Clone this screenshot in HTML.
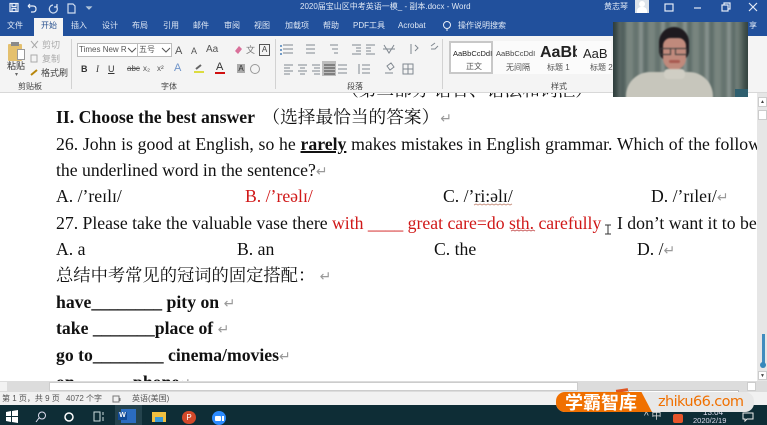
<!DOCTYPE html>
<html><head><meta charset="utf-8"><style>
html,body{margin:0;padding:0;background:#fff}
#p{position:relative;width:767px;height:425px;overflow:hidden;background:#fff;font-family:"Liberation Sans","Noto Sans CJK SC",sans-serif}
#p div,#p svg{position:absolute}
.t{white-space:nowrap;color:#444;font-size:8px;line-height:10px;filter:blur(.25px)}
.w{color:#dfe8f5}
.d{font-family:"Liberation Serif","Noto Serif CJK SC",serif;font-size:17.7px;line-height:20px;color:#111;white-space:nowrap;filter:blur(.35px)}
.b{font-weight:bold}.r{color:#d01818}
.m{color:#999;font-size:14px;line-height:10px;font-family:"DejaVu Sans",sans-serif;font-weight:normal}
.u{text-decoration:underline;text-decoration-thickness:1.5px}
.g{font-size:9px;color:#555}
</style></head><body><div id="p">
<!-- title bar -->
<div style="left:0;top:0;width:767px;height:36px;background:#21509c"></div>
<div class="t w" style="left:7px;top:21px;">文件</div>
<div style="left:34px;top:18px;width:29px;height:20px;background:#f4f4f4"></div>
<div class="t" style="left:41px;top:21px;color:#27508f">开始</div>
<div class="t w" style="left:71px;top:21px">插入</div>
<div class="t w" style="left:102px;top:21px">设计</div>
<div class="t w" style="left:132px;top:21px">布局</div>
<div class="t w" style="left:163px;top:21px">引用</div>
<div class="t w" style="left:193px;top:21px">邮件</div>
<div class="t w" style="left:224px;top:21px">审阅</div>
<div class="t w" style="left:254px;top:21px">视图</div>
<div class="t w" style="left:285px;top:21px">加载项</div>
<div class="t w" style="left:323px;top:21px">帮助</div>
<div class="t w" style="left:353px;top:21px">PDF工具</div>
<div class="t w" style="left:398px;top:21px">Acrobat</div>
<div class="t w" style="left:458px;top:21px">操作说明搜索</div>
<div class="t w" style="left:749px;top:21px">享</div>
<svg style="left:441px;top:20px" width="12" height="13" viewBox="0 0 12 13"><circle cx="6" cy="5" r="3.5" fill="none" stroke="#e8eef8"/><path d="M5 10h2" stroke="#e8eef8"/></svg>
<div class="t w" style="left:300px;top:2px;font-size:8px">2020届宝山区中考英语一模_ - 副本.docx  -  Word</div>
<!-- qat -->
<svg style="left:8px;top:2px" width="90" height="14" viewBox="0 0 90 14" fill="none" stroke="#e8eef8" stroke-width="1.2"><rect x="2" y="1.5" width="8" height="8"/><path d="M4 2v2.500h4V2M4 9.500V6.500h4v3"/><path d="M20 4h5q3 0 3 3t-3 3h-2M20 4l2-2M20 4l2 2"/><path d="M45 3a4 4 0 1 0 3 1M49 2v3h-3" stroke="#cfdcef"/><path d="M60 2h5l2 2v7h-7z" stroke="#cfdcef"/><path d="M79 5h4l-2 2z" stroke="#bcd"/></svg>
<!-- top right -->
<div class="t w" style="left:604px;top:2px;font-size:8px">黄志琴</div>
<div style="left:635px;top:0;width:14px;height:13px;background:#dde3ea"></div>
<div style="left:639px;top:1px;width:6px;height:6px;border-radius:3px;background:#fff"></div>
<div style="left:637px;top:7px;width:10px;height:6px;border-radius:4px 4px 0 0;background:#fff"></div>
<svg style="left:664px;top:2px" width="100" height="11" viewBox="0 0 100 11" fill="none" stroke="#e4ebf6" stroke-width="1.2"><rect x="1" y="2" width="8" height="7"/><path d="M30 6h7"/><rect x="58" y="3" width="6" height="6"/><path d="M60 3V1h6v6h-2"/><path d="M85 1l8 8M93 1l-8 8"/></svg>
<!-- ribbon -->
<div style="left:0;top:36px;width:767px;height:57px;background:#f4f4f4"></div>
<div style="left:0;top:92px;width:767px;height:1px;background:#d8d8d8"></div>
<div style="left:71px;top:39px;width:1px;height:50px;background:#d2d2d2"></div>
<div style="left:275px;top:39px;width:1px;height:50px;background:#d2d2d2"></div>
<div style="left:442px;top:39px;width:1px;height:50px;background:#d2d2d2"></div>
<!-- clipboard -->
<div style="left:8px;top:44px;width:14px;height:17px;background:#e4c06e;border-radius:1px"></div>
<div style="left:11px;top:42px;width:8px;height:4px;background:#8a8a8a"></div>
<div style="left:17px;top:49px;width:8px;height:11px;background:#fff;border:1px solid #999;box-sizing:border-box"></div>
<div class="t g" style="left:7px;top:61px;color:#333">粘贴</div>
<div class="t" style="left:15px;top:70px;font-size:6px;color:#666">▾</div>
<div class="t g" style="left:42px;top:40px;color:#aaa">剪切</div>
<div class="t g" style="left:42px;top:54px;color:#aaa">复制</div>
<div class="t g" style="left:41px;top:68px;color:#444">格式刷</div>
<svg style="left:29px;top:39px" width="12" height="40" viewBox="0 0 12 40" fill="none" stroke="#aaa"><path d="M2 2l6 7M9 2l-6 7"/><rect x="2" y="16" width="6" height="7"/><path d="M2 36l6-5" stroke="#b8860b" stroke-width="2"/></svg>
<div class="t" style="left:18px;top:82px;font-size:8px">剪贴板</div>
<!-- font -->
<div style="left:77px;top:43px;width:95px;height:14px;background:#fff;border:1px solid #bbb;box-sizing:border-box"></div>
<div style="left:137px;top:43px;width:1px;height:14px;background:#bbb"></div>
<div class="t" style="left:79px;top:45px;font-size:8px;color:#555">Times New R</div>
<div class="t" style="left:139px;top:45px;font-size:8px;color:#555">五号</div>
<svg style="left:126px;top:47px" width="46" height="6" viewBox="0 0 46 6" fill="none" stroke="#555"><path d="M2 1l4 4 4-4M36 1l4 4 4-4"/></svg>
<div class="t" style="left:175px;top:46px;font-size:11px;color:#555">A</div>
<div class="t" style="left:191px;top:46px;font-size:9px;color:#555">A</div>
<div class="t" style="left:206px;top:45px;font-size:10px;color:#555">Aa</div>
<div class="t" style="left:246px;top:45px;font-size:9px;color:#777">文</div>
<div style="left:259px;top:44px;width:9px;height:10px;border:1px solid #555;font-size:8px;line-height:10px;text-align:center;color:#444">A</div>
<svg style="left:234px;top:45px" width="9" height="10" viewBox="0 0 9 10"><path d="M1 6l4-5 3 3-4 5z" fill="#d9709a"/></svg>
<div class="t" style="left:81px;top:64px;font-size:9px;font-weight:bold;color:#333;font-family:'Liberation Sans'">B</div>
<div class="t" style="left:96px;top:64px;font-size:9px;font-style:italic;font-family:'Liberation Serif';color:#333">I</div>
<div class="t" style="left:108px;top:64px;font-size:9px;text-decoration:underline;color:#333">U</div>
<div class="t" style="left:127px;top:64px;font-size:8px;text-decoration:line-through;color:#555">abc</div>
<div class="t" style="left:143px;top:64px;font-size:8px;color:#555">x₂</div>
<div class="t" style="left:157px;top:64px;font-size:8px;color:#555">x²</div>
<div class="t" style="left:174px;top:63px;font-size:11px;color:#6f94c9">A</div>
<svg style="left:194px;top:63px" width="11" height="11" viewBox="0 0 11 11"><path d="M2 6l5-4" stroke="#666" stroke-width="2"/><path d="M0 9h10" stroke="#dcdc40" stroke-width="2"/></svg>
<div class="t" style="left:216px;top:62px;font-size:11px;color:#333">A</div>
<div style="left:215px;top:72px;width:10px;height:2px;background:#d01010"></div>
<div style="left:237px;top:64px;width:8px;height:9px;background:#aaa;font-size:8px;line-height:9px;text-align:center;color:#333">A</div>
<div style="left:250px;top:64px;width:8px;height:8px;border:1px solid #999;border-radius:5px"></div>
<div class="t" style="left:161px;top:82px;font-size:8px">字体</div>
<!-- para -->
<div style="left:322px;top:61px;width:14px;height:15px;background:#bdbdbd"></div>
<svg style="left:276px;top:36px" width="166" height="44" viewBox="0 0 166 44" fill="none" stroke="#808890" stroke-width="1"><path d="M7 9h10M7 13h10M7 17h10M30 9h9M30 13h9M30 17h9M54 9h8M56 13h6M58 17h4M76 9h9M80 12h5M80 15h5M76 18h9M90 9h9M90 12h5M90 15h5M90 18h9M108 9l5 8 5-8M107 13h12M135 8v10M139 9l3 3-3 3M155 10l4-3M155 13h4l3-3M8 29h9M8 32h6M8 35h9M8 38h6M22 29h9M24 32h5M22 35h9M24 38h5M36 29h8M38 32h6M36 35h8M38 38h6M62 29h9M62 33h9M62 37h9M83 28v10M86 29h8M86 33h8M86 37h8M111 30l4-3 3 4-4 3zM109 37h8M127 28h10v10h-10zM127 33h10M132 28v10"/><path d="M48 29h11M48 32h11M48 35h11M48 38h11" stroke="#444"/></svg>
<svg style="left:279px;top:44px" width="6" height="12" viewBox="0 0 6 12"><circle cx="2" cy="2" r="1" fill="#4a7fb8"/><circle cx="2" cy="6" r="1" fill="#4a7fb8"/><circle cx="2" cy="10" r="1" fill="#4a7fb8"/></svg>
<div class="t" style="left:347px;top:82px;font-size:8px">段落</div>
<!-- styles -->
<div style="left:449px;top:41px;width:44px;height:33px;background:#fff;border:2px solid #c8c8c8;box-sizing:border-box"></div>
<div style="left:493px;top:41px;width:118px;height:33px;background:#fbfbfb"></div>
<div class="t" style="left:453px;top:49px;font-size:7.500px;color:#222">AaBbCcDdI</div>
<div class="t" style="left:496px;top:49px;font-size:7.500px;color:#444">AaBbCcDdI</div>
<div class="t" style="left:540px;top:44px;font-size:16px;line-height:18px;font-weight:bold;color:#222;width:37px;overflow:hidden">AaBb</div>
<div class="t" style="left:583px;top:46px;font-size:13px;line-height:16px;color:#222">AaB</div>
<div class="t" style="left:466px;top:62px;font-size:8px;color:#555">正文</div>
<div class="t" style="left:506px;top:63px;font-size:8px;color:#555">无间隔</div>
<div class="t" style="left:547px;top:63px;font-size:8px;color:#555">标题 1</div>
<div class="t" style="left:590px;top:63px;font-size:8px;color:#555">标题 2</div>
<div class="t" style="left:551px;top:82px;font-size:8px">样式</div>
<!-- doc text -->
<div style="left:0;top:93px;width:757px;height:288px;overflow:hidden">
<div class="d" style="left:341px;top:-13px">（第二部分  语音、语法和词汇）</div>
<div class="d b" style="left:56px;top:14px">II. Choose the best answer<span style="font-weight:normal;margin-left:3px">  （选择最恰当的答案）</span><span class="m" style="margin-left:1px">↵</span></div>
<div class="d" style="left:56px;top:41px;word-spacing:.35px">26. John is good at English, so he <span class="b u">rarely</span> makes mistakes in English grammar. Which of the following</div>
<div class="d" style="left:56px;top:67px">the underlined word in the sentence?<span class="m">↵</span></div>
<div class="d" style="left:56px;top:93px">A. /’reɪlɪ/</div>
<div class="d r" style="left:245px;top:93px">B. /’reəlɪ/</div>
<div class="d" style="left:443px;top:93px">C. /’ri:əlɪ/</div>
<div class="d" style="left:651px;top:93px">D. /’rɪleɪ/<span class="m">↵</span></div>
<div class="d" style="left:56px;top:120px">27. Please take the valuable vase there <span class="r">with ____ great care=do sth. carefully</span></div>
<div class="d" style="left:617px;top:120px">I don’t want it to be broken</div>
<div class="d" style="left:56px;top:146px">A. a</div>
<div class="d" style="left:237px;top:146px">B. an</div>
<div class="d" style="left:434px;top:146px">C. the</div>
<div class="d" style="left:637px;top:146px">D. /<span class="m">↵</span></div>
<div class="d" style="left:56px;top:173px;font-size:17.300px">总结中考常见的冠词的固定搭配：<span class="m"> ↵</span></div>
<div class="d b" style="left:56px;top:199px">have________ pity on <span class="m"> ↵</span></div>
<div class="d b" style="left:56px;top:225px">take _______place of <span class="m"> ↵</span></div>
<div class="d b" style="left:56px;top:252px">go to________ cinema/movies<span class="m">↵</span></div>
<div class="d b" style="left:56px;top:279px">on</div>
<div class="d b" style="left:133px;top:279px">phone<span class="m">↵</span></div>
</div>
<!-- wavy -->
<svg style="left:473px;top:203px" width="42" height="3" viewBox="0 0 42 3" fill="none" stroke="#c98"><path d="M1 2l2-1 2 1 2-1 2 1 2-1 2 1 2-1 2 1 2-1 2 1 2-1 2 1 2-1 2 1 2-1 2 1 2-1 2 1 2-1"/></svg>
<svg style="left:510px;top:229px" width="28" height="3" viewBox="0 0 28 3" fill="none" stroke="#c66"><path d="M1 2l2-1 2 1 2-1 2 1 2-1 2 1 2-1 2 1 2-1 2 1 2-1 2 1"/></svg>
<svg style="left:604px;top:224px" width="8" height="11" viewBox="0 0 8 11" fill="none" stroke="#333"><path d="M1 1h6M4 1v9M1 10h6"/></svg>
<!-- scrollbars -->
<div style="left:757px;top:93px;width:10px;height:288px;background:#e6e6e6"></div>
<div style="left:758px;top:97px;width:9px;height:10px;background:#fff;border:1px solid #ccc;box-sizing:border-box"></div>
<div class="t" style="left:760px;top:97px;font-size:5px;color:#444">▲</div>
<div style="left:758px;top:110px;width:9px;height:10px;background:#fff;border:1px solid #ccc;box-sizing:border-box"></div>
<div style="left:762px;top:334px;width:3px;height:32px;background:#3f8cbf"></div>
<div style="left:760px;top:362px;width:6px;height:6px;border-radius:3px;background:#3588bb"></div>
<div style="left:758px;top:371px;width:9px;height:9px;background:#fff;border:1px solid #ccc;box-sizing:border-box"></div>
<div class="t" style="left:760px;top:371px;font-size:5px;color:#444">▼</div>
<div style="left:0;top:381px;width:767px;height:11px;background:#dcdcdc"></div>
<div style="left:49px;top:382px;width:529px;height:9px;background:#fff;border:1px solid #ccc;box-sizing:border-box"></div>
<div style="left:0;top:382px;width:7px;height:9px;background:#f2f2f2"></div>
<div style="left:747px;top:382px;width:9px;height:9px;background:#fff;border:1px solid #ccc;box-sizing:border-box"></div>
<!-- status -->
<div style="left:0;top:392px;width:767px;height:13px;background:#f1f1f1"></div>
<div class="t" style="left:2px;top:394px;font-size:8px;color:#555">第 1 页，共 9 页</div>
<div class="t" style="left:66px;top:394px;font-size:8px;color:#555">4072 个字</div>
<div class="t" style="left:132px;top:394px;font-size:8px;color:#555">英语(美国)</div>
<svg style="left:112px;top:395px" width="10" height="8" viewBox="0 0 10 8" fill="none" stroke="#777"><rect x="1" y="1" width="6" height="6"/><path d="M8 3v3"/></svg>
<div style="left:628px;top:390px;width:111px;height:8px;background:#fff;border:1px solid #bbb;box-sizing:border-box"></div>
<div style="left:616px;top:389px;width:12px;height:3px;background:#e05520;transform:rotate(-8deg)"></div>
<!-- taskbar -->
<div style="left:0;top:405px;width:767px;height:20px;background:#0e2d36"></div>
<div style="left:115px;top:405px;width:27px;height:20px;background:#24434d"></div>
<svg style="left:6px;top:410px" width="230" height="14" viewBox="0 0 230 14"><path d="M0 2l5-1v5H0zM6 1l6-1v6H6zM0 7h5v5l-5-1zM6 7h6v6l-6-1z" fill="#fff"/><circle cx="36" cy="5.500" r="3.500" fill="none" stroke="#dde"/><path d="M33 8l-3 4" stroke="#dde"/><circle cx="63" cy="7" r="4" fill="none" stroke="#fff" stroke-width="1.500"/><path d="M88 2h6v9h-6zM97 2v3M97 7v4" fill="none" stroke="#cdd"/></svg>
<div style="left:121px;top:409px;width:15px;height:14px;background:#2b6cc0"></div>
<div style="left:118px;top:412px;width:9px;height:8px;background:#114a96;color:#fff;font-size:7px;line-height:8px;font-weight:bold;text-align:center">W</div>
<div style="left:152px;top:412px;width:14px;height:10px;background:#f0c040"></div>
<div style="left:155px;top:417px;width:8px;height:5px;background:#3a9ad8"></div>
<div style="left:182px;top:411px;width:14px;height:13px;border-radius:7px;background:#d2492a;color:#fff;font-size:8px;line-height:13px;text-align:center">P</div>
<div style="left:212px;top:411px;width:14px;height:14px;border-radius:7px;background:#2d8cff"></div>
<div style="left:215px;top:416px;width:6px;height:5px;background:#fff;border-radius:1px"></div>
<div style="left:222px;top:416px;width:2px;height:5px;background:#fff"></div>
<!-- tray -->
<div class="t" style="left:703px;top:408px;font-size:8px;color:#dde">13:04</div>
<div class="t" style="left:644px;top:412px;font-size:10px;color:#ddd">^ 中</div>
<div style="left:673px;top:414px;width:10px;height:9px;border-radius:2px;background:#e8552a"></div>
<div class="t" style="left:693px;top:416px;font-size:7.500px;color:#dde">2020/2/19</div>
<svg style="left:742px;top:412px" width="13" height="12" viewBox="0 0 13 12" fill="none" stroke="#eee"><path d="M1 1h10v6H5l-2 2V7H1z"/></svg>
<!-- watermark -->
<div style="left:556px;top:392px;width:198px;height:20px;border-radius:9px;background:#e8e8e8"></div>
<div style="left:556px;top:392px;width:96px;height:20px;border-radius:9px 0 0 9px;background:#f07000;clip-path:polygon(0 0,89% 0,100% 100%,0 100%)"></div>
<div style="left:565px;top:392px;font:bold 18px/20px 'Noto Sans CJK SC',sans-serif;color:#fff;white-space:nowrap">学霸智库</div>
<div style="left:658px;top:392px;font:14.500px/20px 'DejaVu Sans',sans-serif;color:#f07000;white-space:nowrap;letter-spacing:-.6px">zhiku66.com</div>
<!-- video -->
<div style="left:613px;top:22px;width:135px;height:75px;overflow:hidden;background:#6f7d79">
<div style="left:-2px;top:-2px;width:139px;height:79px;filter:blur(1.2px);background:repeating-linear-gradient(90deg,#66746f 0 6px,#87928e 6px 10px,#5f6e6a 10px 15px,#78857f 15px 22px)"></div>
<div style="left:0;top:0;width:14px;height:75px;background:linear-gradient(90deg,#2e3d3c,transparent)"></div>
<div style="right:0;top:0;width:12px;height:75px;background:linear-gradient(270deg,#34433f,transparent)"></div>
<div style="left:0;top:0;width:135px;height:75px;filter:blur(.7px)">
<div style="left:46px;top:5px;width:30px;height:34px;border-radius:15px 15px 10px 10px;background:#1e1a1f"></div>
<div style="left:50px;top:16px;width:23px;height:32px;border-radius:8px 8px 12px 12px;background:#c08a7c"></div>
<div style="left:47px;top:26px;width:27px;height:1px;background:#444"></div>
<div style="left:47px;top:26px;width:11px;height:7px;border:1px solid #3a3a3a;box-sizing:border-box"></div>
<div style="left:62px;top:26px;width:12px;height:7px;border:1px solid #3a3a3a;box-sizing:border-box"></div>
<div style="left:56px;top:38px;width:11px;height:3px;background:#a85a50;border-radius:2px"></div>
<div style="left:13px;top:50px;width:87px;height:40px;border-radius:24px 24px 0 0;background:#c7c6bc"></div>
<div style="left:51px;top:47px;width:21px;height:10px;border-radius:4px;background:#d0cec4"></div>
</div>
<div style="left:122px;top:67px;width:13px;height:8px;background:#2f5f6e"></div>
</div>
</div></body></html>
